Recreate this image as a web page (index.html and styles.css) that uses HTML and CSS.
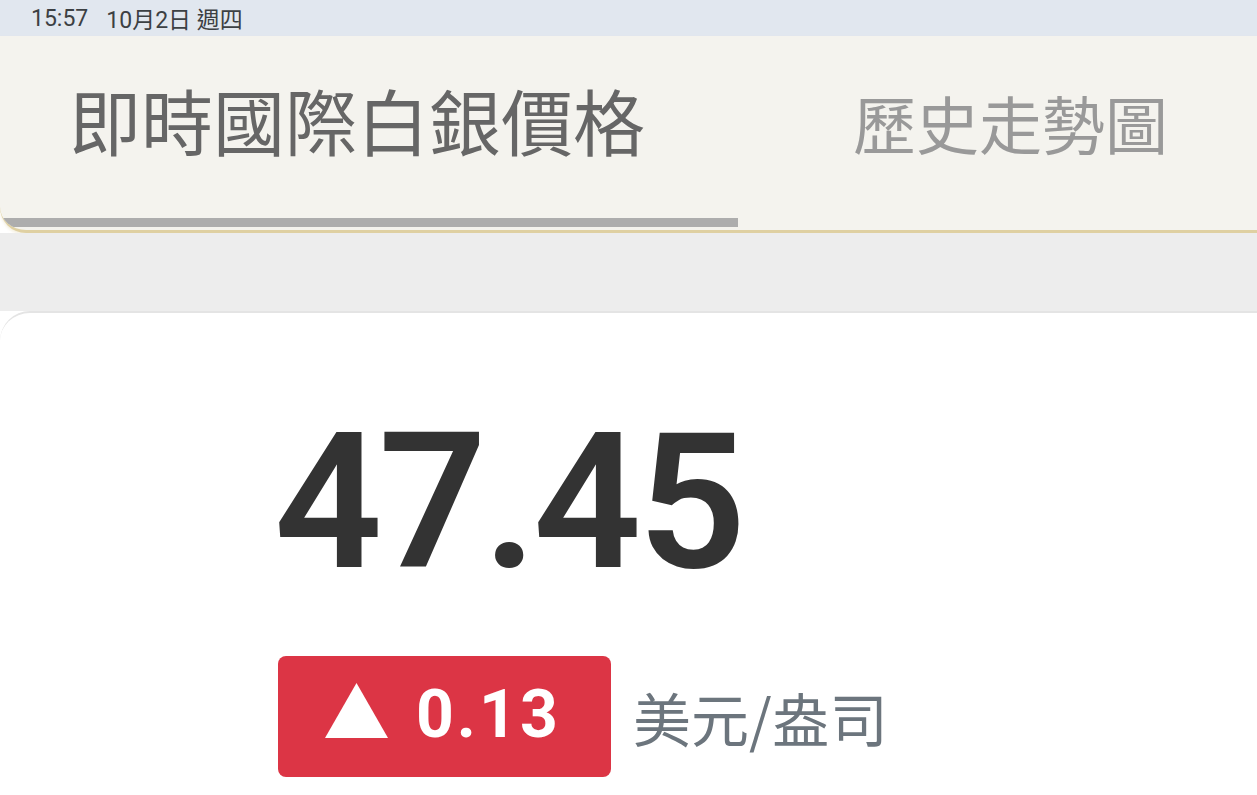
FILE: index.html
```html
<!doctype html>
<html lang="zh-Hant">
	<head>
		<meta charset="UTF-8">
		<title>即時國際白銀價格</title>
		<link rel="stylesheet" href="styles.css">
	</head>
	<body>
		<div class="statusbar">
			<span class="clock">15:57</span>
			<span class="date">10月2日 週四</span>
		</div>

		<div class="tabs">
			<div class="tab on">
				<div class="label">即時國際白銀價格</div>
				<div class="bar"></div>
			</div>
			<div class="tab">
				<div class="label">歷史走勢圖</div>
				<div class="bar"></div>
			</div>
		</div>

		<div class="gap"></div>

		<div class="card">
			<div class="price">47.45</div>
			<div class="change">
				<span class="badge">
					<svg class="arrow" width="63" height="55" viewBox="0 0 63 55"><polygon points="31.5,0 63,55 0,55" fill="#fff"/></svg>
					<span class="num">0.13</span>
				</span>
				<span class="unit">美元/盎司</span>
			</div>
		</div>
	</body>
</html>
```

FILE: styles.css
```css
html,body{margin:0; padding:0; background:#fff; overflow:hidden;}
body{font-family:Roboto,"Noto Sans CJK TC",sans-serif; height:795px;}

.statusbar{height:36px; background:#e1e7ef; color:#3c4043; font-size:23px; display:flex; align-items:center; padding-left:31px;}
.statusbar .date{margin-left:18px;}

.tabs{display:flex; height:194px; background:#f4f3ee; border-bottom:3px solid #dfd0a2; border-bottom-left-radius:26px; overflow:hidden; box-shadow:0 2px 3px rgba(223,208,162,.35);}
.tab{display:flex; flex-direction:column;}
.tab.on{width:738px; flex:none;}
.tab:not(.on){flex:1;}
.label{flex:1; display:flex; align-items:center; font-family:"Noto Sans CJK TC",sans-serif;}
.tab.on .label{font-size:72px; color:#666; padding-left:69px; padding-bottom:18px;}
.tab:not(.on) .label{font-size:63px; color:#999; padding-left:115px; padding-bottom:11px;}
.bar{height:9px; margin-bottom:3px;}
.tab.on .bar{background:#adadad;}

.gap{height:78px; background:#ededed;}

.card{background:#fff; border-top:2px solid #e4e4e4; border-top-left-radius:30px; height:480px; padding-left:278px;}
.price{font-family:Roboto,sans-serif; font-weight:600; font-size:190px; line-height:1; color:#333; margin-top:94px; margin-left:-4px; letter-spacing:-4px;}
.change{display:flex; align-items:center; margin-top:59px;}
.badge{display:flex; align-items:center; height:121px; width:333px; box-sizing:border-box; padding-left:47px; background:#dc3545; border-radius:8px;}
.arrow{display:block; margin-bottom:13px;}
.num{font-family:Roboto,sans-serif; font-weight:700; font-size:66px; line-height:1; color:#fff; margin-left:28px; margin-bottom:4px; letter-spacing:3px;}
.unit{font-family:"Noto Sans CJK TC",sans-serif; font-size:58px; color:#6c757d; margin-left:22px;}
```
